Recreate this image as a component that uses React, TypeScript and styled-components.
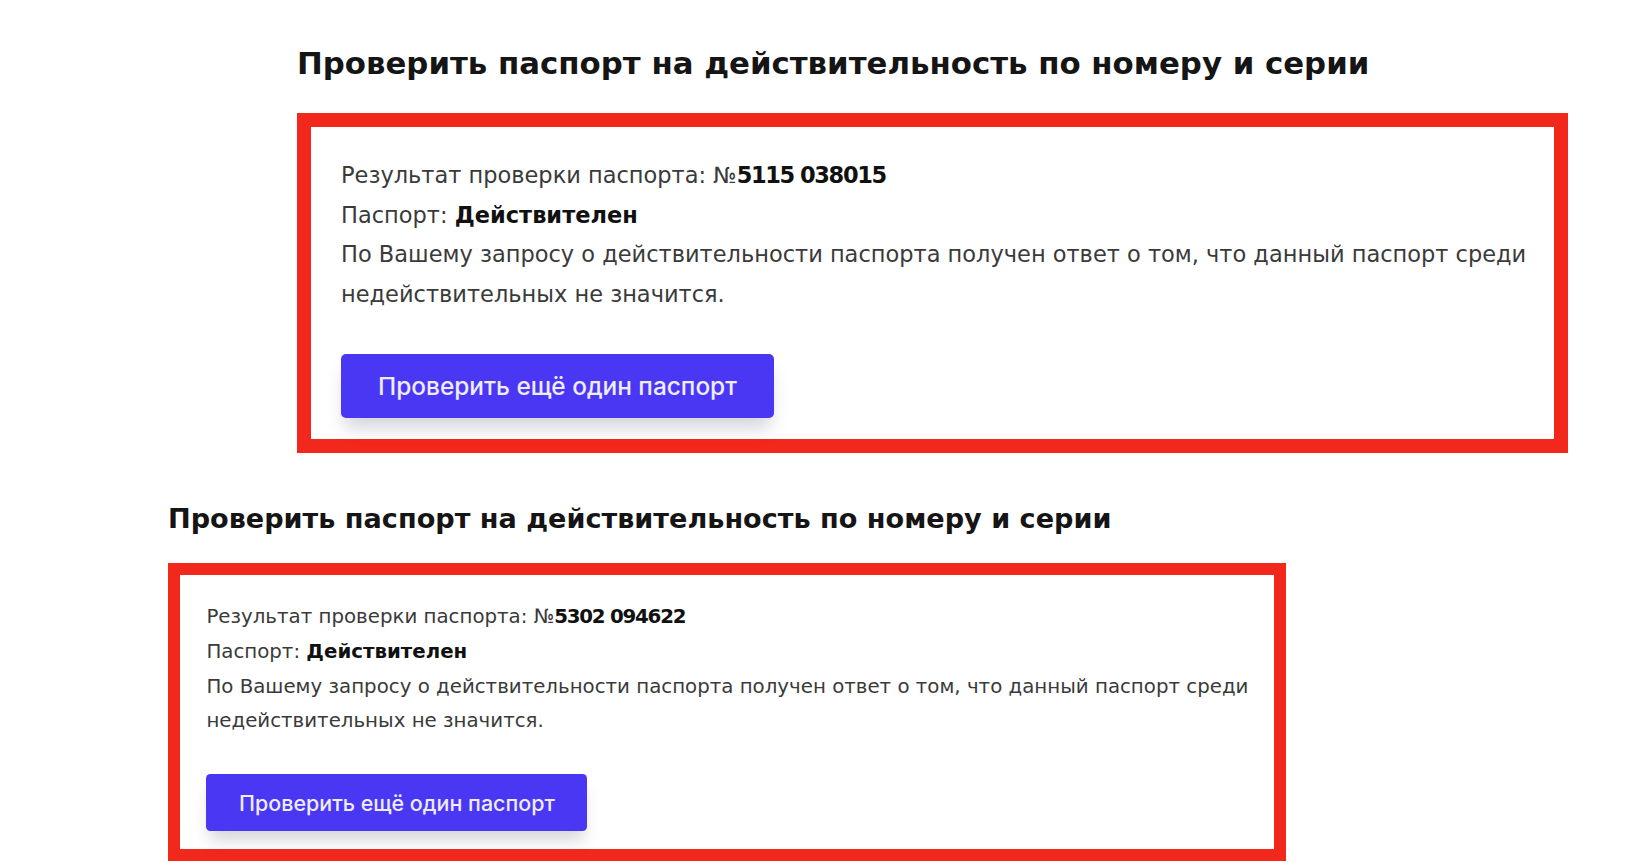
import styled, { createGlobalStyle } from 'styled-components';

const GlobalStyle = createGlobalStyle`
  html, body {
    margin: 0;
    padding: 0;
    background: #ffffff;
  }
  body {
    font-family: "DejaVu Sans", "Open Sans", sans-serif;
  }
`;

const Page = styled.main`
  display: flex;
  flex-direction: column;
  padding-top: 43px;
`;

const Section = styled.section<{ $left: number }>`
  display: flex;
  flex-direction: column;
  margin-left: ${(p) => p.$left}px;
  & + & {
    margin-top: 48px;
  }
`;

const Heading = styled.h2<{ $s: number }>`
  margin: 0;
  font-family: "DejaVu Sans", "Open Sans", sans-serif;
  font-weight: 700;
  font-size: ${(p) => 30.8 * p.$s}px;
  line-height: ${(p) => 40 * p.$s}px;
  color: #151515;
  white-space: nowrap;
`;

const ResultBox = styled.div<{ $s: number }>`
  box-sizing: border-box;
  width: ${(p) => 1271 * p.$s}px;
  margin-top: ${(p) => 30 * p.$s}px;
  border: ${(p) => 14 * p.$s}px solid #f3281d;
  padding: ${(p) => `${29 * p.$s}px ${30 * p.$s}px ${21 * p.$s}px`};
  background: #ffffff;
`;

const Line = styled.p<{ $s: number }>`
  margin: 0;
  font-family: "DejaVu Sans", "Open Sans", sans-serif;
  font-size: ${(p) => 22.5 * p.$s}px;
  line-height: ${(p) => 39.5 * p.$s}px;
  color: #3a3a3a;
  white-space: nowrap;
`;

const Strong = styled.b<{ $s: number; $tight?: boolean }>`
  font-weight: 700;
  color: #111111;
  letter-spacing: ${(p) => (p.$tight ? -1.4 * p.$s : 0)}px;
`;

const RetryButton = styled.button<{ $s: number }>`
  display: flex;
  align-items: center;
  justify-content: center;
  width: ${(p) => 433 * p.$s}px;
  height: ${(p) => 64 * p.$s}px;
  margin-top: ${(p) => 40 * p.$s}px;
  padding: 0;
  border: none;
  border-radius: ${(p) => 5 * p.$s}px;
  background: #4a37f4;
  color: #eeecff;
  font-family: "Inter", "Open Sans", sans-serif;
  font-weight: 500;
  font-size: ${(p) => 24.4 * p.$s}px;
  box-shadow: 0 ${(p) => 14 * p.$s}px ${(p) => 18 * p.$s}px -4px rgba(60, 60, 90, 0.22);
  cursor: pointer;
`;

type CheckProps = {
  s: number;
  left: number;
  number: string;
};

const PassportCheck = ({ s, left, number }: CheckProps) => (
  <Section $left={left}>
    <Heading $s={s}>Проверить паспорт на действительность по номеру и серии</Heading>
    <ResultBox $s={s}>
      <Line $s={s}>
        Результат проверки паспорта: №<Strong $s={s} $tight>{number}</Strong>
      </Line>
      <Line $s={s}>
        Паспорт: <Strong $s={s}>Действителен</Strong>
      </Line>
      <Line $s={s}>
        По Вашему запросу о действительности паспорта получен ответ о том, что данный паспорт среди
      </Line>
      <Line $s={s}>недействительных не значится.</Line>
      <RetryButton $s={s}>Проверить ещё один паспорт</RetryButton>
    </ResultBox>
  </Section>
);

export default function App() {
  return (
    <>
      <GlobalStyle />
      <Page>
        <PassportCheck s={1} left={297} number="5115 038015" />
        <PassportCheck s={0.88} left={168} number="5302 094622" />
      </Page>
    </>
  );
}
